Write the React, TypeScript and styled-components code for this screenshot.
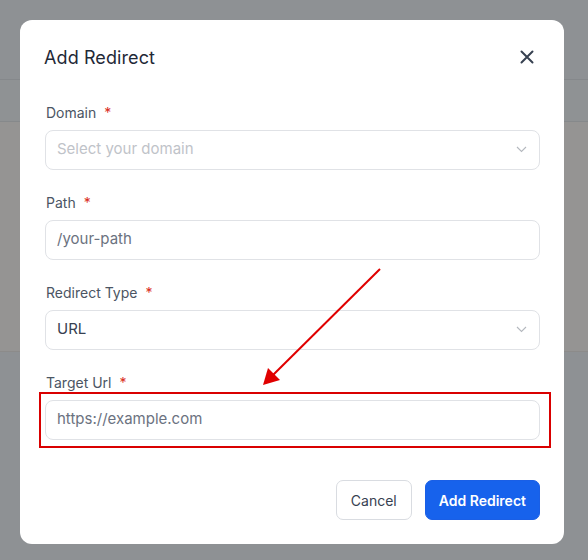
import * as React from "react";
import styled, { createGlobalStyle } from "styled-components";

const GlobalStyle = createGlobalStyle`
  html, body {
    margin: 0;
    padding: 0;
    width: 588px;
    height: 560px;
    overflow: hidden;
    font-family: Inter, "Noto Sans", sans-serif;
  }
  * { box-sizing: border-box; }
`;

const Page = styled.div`
  position: relative;
  width: 588px;
  height: 560px;
  display: flex;
  flex-direction: column;
  background: #8e9194;
`;

const Band = styled.div<{ $h: number; $bg: string }>`
  height: ${(p) => p.$h}px;
  background: ${(p) => p.$bg};
  border-bottom: 1px solid rgba(0, 0, 0, 0.06);
  flex-shrink: 0;
`;

const Modal = styled.div`
  position: absolute;
  left: 20px;
  top: 20px;
  width: 544px;
  height: 524px;
  background: #ffffff;
  border-radius: 12px;
  padding: 23px 24px 24px;
  display: flex;
  flex-direction: column;
`;

const Header = styled.div`
  display: flex;
  align-items: center;
  justify-content: space-between;
  height: 28px;
  margin-bottom: 32px;
`;

const Title = styled.h2`
  margin: 0;
  font-size: 18px;
  font-weight: 400;
  color: #1f2937;
  letter-spacing: 0.1px;
`;

const CloseButton = styled.button`
  border: none;
  background: none;
  padding: 0;
  margin-right: 4px;
  width: 18px;
  height: 18px;
  display: flex;
  align-items: center;
  justify-content: center;
  color: #374151;
  cursor: pointer;
`;

const Fields = styled.div`
  display: flex;
  flex-direction: column;
  gap: 23px;
  padding: 0 0 0 1px;
`;

const Field = styled.div`
  display: flex;
  flex-direction: column;
  gap: 7px;
`;

const Label = styled.label`
  font-size: 14px;
  line-height: 20px;
  color: #4b5563;
  padding-left: 1px;
`;

const Star = styled.span`
  color: #d92d20;
  margin-left: 8px;
`;

const InputBox = styled.div`
  height: 40px;
  border: 1px solid #e0e2e6;
  border-radius: 8px;
  display: flex;
  align-items: center;
  justify-content: space-between;
  padding: 0 12px 2px 11px;
  background: #fff;
`;

const InputText = styled.span<{ $tone: "faint" | "muted" | "value" }>`
  font-size: 15px;
  line-height: 20px;
  color: ${(p) =>
    p.$tone === "faint" ? "#bfc3c9" : p.$tone === "muted" ? "#6b7280" : "#374151"};
`;

const Footer = styled.div`
  margin-top: auto;
  display: flex;
  justify-content: flex-end;
  gap: 13px;
`;

const Button = styled.button<{ $primary?: boolean }>`
  height: 40px;
  border-radius: 7px;
  font-family: Inter, "Noto Sans", sans-serif;
  font-size: 14px;
  padding: 0 ${(p) => (p.$primary ? 13 : 14)}px;
  cursor: pointer;
  border: 1px solid ${(p) => (p.$primary ? "#1a5fe6" : "#d9dce1")};
  background: ${(p) => (p.$primary ? "#1762ec" : "#ffffff")};
  color: ${(p) => (p.$primary ? "#ffffff" : "#374151")};
  font-weight: ${(p) => (p.$primary ? 600 : 400)};
`;

const Annotation = styled.svg`
  position: absolute;
  left: 0;
  top: 0;
  pointer-events: none;
`;

const Chevron = () => (
  <svg width="11" height="7" viewBox="0 0 11 7" fill="none">
    <path d="M1 1l4.5 4.5L10 1" stroke="#b4b8be" strokeWidth="1.1" />
  </svg>
);

export default function App() {
  return (
    <>
      <GlobalStyle />
      <Page>
        <Band $h={80} $bg="#8e9194" />
        <Band $h={42} $bg="#8f9294" />
        <Band $h={230} $bg="#959493" />
        <Modal>
          <Header>
            <Title>Add Redirect</Title>
            <CloseButton aria-label="Close">
              <svg width="14" height="14" viewBox="0 0 14 14">
                <path d="M1.5 1.5l11 11M12.5 1.5l-11 11" stroke="#374151" strokeWidth="2" strokeLinecap="round" />
              </svg>
            </CloseButton>
          </Header>
          <Fields>
            <Field>
              <Label>Domain<Star>*</Star></Label>
              <InputBox>
                <InputText $tone="faint">Select your domain</InputText>
                <Chevron />
              </InputBox>
            </Field>
            <Field>
              <Label>Path<Star>*</Star></Label>
              <InputBox>
                <InputText $tone="muted">/your-path</InputText>
              </InputBox>
            </Field>
            <Field>
              <Label>Redirect Type<Star>*</Star></Label>
              <InputBox>
                <InputText $tone="value">URL</InputText>
                <Chevron />
              </InputBox>
            </Field>
            <Field>
              <Label>Target Url<Star>*</Star></Label>
              <InputBox>
                <InputText $tone="muted">https://example.com</InputText>
              </InputBox>
            </Field>
          </Fields>
          <Footer>
            <Button>Cancel</Button>
            <Button $primary>Add Redirect</Button>
          </Footer>
        </Modal>
        <Annotation width="588" height="560" viewBox="0 0 588 560">
          <rect x="40" y="393" width="510" height="54" fill="none" stroke="#d90000" strokeWidth="2" />
          <line x1="380" y1="269" x2="272" y2="376" stroke="#e00000" strokeWidth="2" />
          <polygon points="263,385 268,368 280,380" fill="#e00000" />
        </Annotation>
      </Page>
    </>
  );
}
